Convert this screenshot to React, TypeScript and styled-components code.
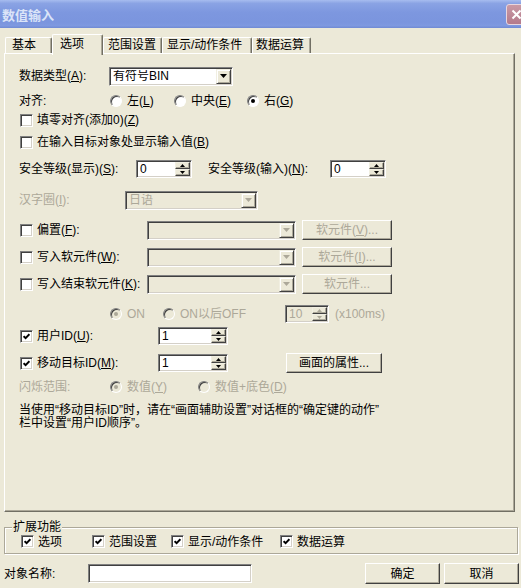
import type { ReactNode } from "react";
import styled, { createGlobalStyle } from "styled-components";

const FACE = "#ECE9D8";
const GRAY = "#ACA899";

const GlobalStyle = createGlobalStyle`
  html, body { margin: 0; padding: 0; background: ${FACE}; }
  body {
    font-family: "Liberation Sans", "Noto Sans CJK SC", sans-serif;
    font-size: 12px;
    color: #000;
  }
  * { box-sizing: border-box; }
`;

const Window = styled.div`
  width: 521px;
  height: 588px;
  overflow: hidden;
  display: flex;
  flex-direction: column;
  background: ${FACE};
`;

const TitleBar = styled.div`
  height: 28px;
  flex-shrink: 0;
  display: flex;
  align-items: center;
  justify-content: space-between;
  padding-left: 2px;
  background: linear-gradient(
    to bottom,
    #a7bcef 0%,
    #8aa3e4 12%,
    #7d97df 45%,
    #7b95de 80%,
    #7f99e0 92%,
    #6f89d3 100%
  );
`;

const Title = styled.span`
  font-family: "Noto Sans CJK SC", sans-serif;
  font-weight: bold;
  font-size: 13px;
  line-height: 16px;
  color: #dbe4f8;
  margin-top: 1px;
`;

const CloseButton = styled.div`
  width: 21px;
  height: 21px;
  margin-right: -6px;
  border: 1px solid #e8d6de;
  border-radius: 3px;
  background: linear-gradient(to bottom, #c99aa6, #b47a8b);
  display: flex;
  align-items: center;
  justify-content: center;
`;

const TabStrip = styled.div`
  display: flex;
  align-items: flex-end;
  height: 19px;
  margin-top: 6px;
  padding-left: 5px;
  position: relative;
  z-index: 1;
`;

const Tab = styled.div<{ $w: number; $pl: number; $active?: boolean }>`
  width: ${(p) => p.$w}px;
  height: ${(p) => (p.$active ? 21 : 16)}px;
  margin-bottom: ${(p) => (p.$active ? -2 : 0)}px;
  padding-left: ${(p) => p.$pl}px;
  padding-top: ${(p) => (p.$active ? 2 : 0)}px;
  background: ${FACE};
  border-top: 1px solid #fff;
  border-left: 1px solid #fff;
  border-right: 1px solid #716f64;
  border-radius: 2px 2px 0 0;
  box-shadow: inset -1px 0 0 ${GRAY};
  line-height: 15px;
  white-space: nowrap;
`;

const Panel = styled.div`
  margin: 0 6px 0 4px;
  height: 459px;
  flex-shrink: 0;
  border-top: 1px solid #fff;
  border-left: 1px solid #fff;
  border-right: 1px solid #716f64;
  border-bottom: 1px solid #716f64;
  box-shadow: inset -1px -1px 0 ${GRAY};
  padding: 12px 0 0 14px;
`;

const Form = styled.div`
  display: grid;
  grid-template-rows: 25px 19px 22px 27px 31px 30px 27px 27px 30px 22px 27px 24px 26px auto;
  align-items: start;
`;

const Row = styled.div`
  display: flex;
  align-items: center;
  height: 20px;
  white-space: nowrap;
`;

const Label = styled.span<{ $w?: number; $ml?: number; $disabled?: boolean }>`
  ${(p) => (p.$w ? `width: ${p.$w}px;` : "")}
  margin-left: ${(p) => p.$ml ?? 0}px;
  flex-shrink: 0;
  line-height: 14px;
  color: ${(p) => (p.$disabled ? GRAY : "#000")};
  white-space: nowrap;
`;

const U = styled.span`
  text-decoration: underline;
`;

const Field = styled.div<{ $w: number; $h?: number; $ml?: number; $disabled?: boolean }>`
  width: ${(p) => p.$w}px;
  height: ${(p) => p.$h ?? 18}px;
  margin-left: ${(p) => p.$ml ?? 0}px;
  flex-shrink: 0;
  display: flex;
  align-items: stretch;
  padding: 2px;
  border: 1px solid;
  border-color: #808080 #fff #fff #808080;
  box-shadow: inset 1px 1px 0 #404040, inset -1px -1px 0 #d4d0c8;
  background: ${(p) => (p.$disabled ? FACE : "#fff")};
`;

const FieldText = styled.span<{ $disabled?: boolean }>`
  flex: 1;
  padding-left: 1px;
  line-height: 13px;
  color: ${(p) => (p.$disabled ? GRAY : "#000")};
  overflow: hidden;
  white-space: nowrap;
`;

const ArrowButton = styled.div`
  width: 15px;
  flex-shrink: 0;
  margin: -1px -1px -1px 0;
  background: ${FACE};
  border: 1px solid;
  border-color: #f1efe2 #404040 #404040 #f1efe2;
  box-shadow: inset 1px 1px 0 #fff, inset -1px -1px 0 ${GRAY};
  display: flex;
  align-items: center;
  justify-content: center;
`;

const SpinButtons = styled.div`
  width: 15px;
  flex-shrink: 0;
  margin: -1px -1px -1px 0;
  display: flex;
  flex-direction: column;
`;

const SpinButton = styled.div`
  flex: 1;
  background: ${FACE};
  border: 1px solid;
  border-color: #f1efe2 #404040 #404040 #f1efe2;
  box-shadow: inset -1px -1px 0 ${GRAY};
  display: flex;
  align-items: center;
  justify-content: center;
`;

const PushButton = styled.div<{ $w: number; $h: number; $ml?: number; $disabled?: boolean }>`
  width: ${(p) => p.$w}px;
  height: ${(p) => p.$h}px;
  margin-left: ${(p) => p.$ml ?? 0}px;
  flex-shrink: 0;
  background: ${FACE};
  border: 1px solid;
  border-color: #fff #404040 #404040 #fff;
  box-shadow: inset -1px -1px 0 ${GRAY};
  display: flex;
  align-items: center;
  justify-content: center;
  line-height: 14px;
  color: ${(p) => (p.$disabled ? GRAY : "#000")};
  white-space: nowrap;
`;

const CheckItem = styled.div<{ $w?: number; $ml?: number }>`
  ${(p) => (p.$w ? `width: ${p.$w}px;` : "")}
  margin-left: ${(p) => p.$ml ?? 0}px;
  flex-shrink: 0;
  display: flex;
  align-items: center;
  gap: 4px;
`;

const Box = styled.span`
  width: 13px;
  height: 13px;
  flex-shrink: 0;
  border: 1px solid;
  border-color: #808080 #fff #fff #808080;
  box-shadow: inset 1px 1px 0 #404040, inset -1px -1px 0 #d4d0c8;
  background: #fff;
  display: flex;
  align-items: center;
  justify-content: center;
`;

const RadioItem = styled.div<{ $w?: number }>`
  ${(p) => (p.$w ? `width: ${p.$w}px;` : "")}
  flex-shrink: 0;
  display: flex;
  align-items: center;
  gap: 5px;
`;

const RadioCircle = styled.span<{ $on?: boolean; $disabled?: boolean }>`
  width: 12px;
  height: 12px;
  flex-shrink: 0;
  border-radius: 50%;
  border: 1px solid;
  border-color: #808080 #fff #fff #808080;
  box-shadow: inset 1px 1px 0 #404040;
  background: ${(p) => (p.$disabled ? FACE : "#fff")};
  display: flex;
  align-items: center;
  justify-content: center;

  &::after {
    content: "";
    width: 4px;
    height: 4px;
    border-radius: 50%;
    background: ${(p) => (p.$on ? (p.$disabled ? GRAY : "#000") : "transparent")};
  }
`;

const Note = styled.div`
  line-height: 13px;
  padding-top: 1px;
  white-space: nowrap;
`;

const Group = styled.fieldset`
  margin: 8px 3px 0 4px;
  padding: 0 0 4px 0;
  min-width: 0;
  border: 1px solid ${GRAY};
  box-shadow: inset 1px 1px 0 #fff, 1px 1px 0 #fff;
`;

const Legend = styled.legend`
  margin-left: 7px;
  padding: 0 1px;
  line-height: 14px;
  background: ${FACE};
`;

const GroupRow = styled.div`
  display: flex;
  align-items: center;
  height: 15px;
  padding-left: 16px;
  white-space: nowrap;
`;

const BottomBar = styled.div`
  display: flex;
  align-items: center;
  margin-top: 9px;
  padding: 0 2px 0 4px;
  height: 21px;
  gap: 4px;
`;

const Filler = styled.div`
  flex: 1;
`;

const Spacer = styled.span<{ $w: number }>`
  width: ${(p) => p.$w}px;
  flex-shrink: 0;
`;

const Tri = ({ up, color, w = 7 }: { up?: boolean; color: string; w?: number }) => (
  <svg width={w} height={Math.ceil(w / 2)} viewBox={`0 0 ${w} ${Math.ceil(w / 2)}`}>
    <polygon
      points={
        up
          ? `${w / 2},0 ${w},${Math.ceil(w / 2)} 0,${Math.ceil(w / 2)}`
          : `0,0 ${w},0 ${w / 2},${Math.ceil(w / 2)}`
      }
      fill={color}
    />
  </svg>
);

const Combo = ({ w, value, disabled, ml }: { w: number; value?: string; disabled?: boolean; ml?: number }) => (
  <Field $w={w} $h={19} $ml={ml} $disabled={disabled}>
    <FieldText $disabled={disabled}>{value}</FieldText>
    <ArrowButton>
      <Tri color={disabled ? GRAY : "#000"} />
    </ArrowButton>
  </Field>
);

const Spin = ({ w, value, disabled, ml }: { w: number; value: string; disabled?: boolean; ml?: number }) => (
  <Field $w={w} $h={18} $ml={ml} $disabled={disabled}>
    <FieldText $disabled={disabled}>{value}</FieldText>
    <SpinButtons>
      <SpinButton>
        <Tri up w={5} color={disabled ? GRAY : "#000"} />
      </SpinButton>
      <SpinButton>
        <Tri w={5} color={disabled ? GRAY : "#000"} />
      </SpinButton>
    </SpinButtons>
  </Field>
);

const Check = ({
  checked,
  w,
  ml = 1,
  children,
}: {
  checked?: boolean;
  w?: number;
  ml?: number;
  children: ReactNode;
}) => (
  <CheckItem $w={w} $ml={ml}>
    <Box>
      {checked && (
        <svg width="7" height="7" viewBox="0 0 7 7">
          <path d="M0.6 3.2 L2.6 5.2 L6.4 1.2" stroke="#000" strokeWidth="1.9" fill="none" />
        </svg>
      )}
    </Box>
    <Label>{children}</Label>
  </CheckItem>
);

const Radio = ({
  on,
  disabled,
  w,
  children,
}: {
  on?: boolean;
  disabled?: boolean;
  w?: number;
  children: ReactNode;
}) => (
  <RadioItem $w={w}>
    <RadioCircle $on={on} $disabled={disabled} />
    <Label $disabled={disabled}>{children}</Label>
  </RadioItem>
);

const tabs = [
  { name: "基本", w: 47, pl: 6 },
  { name: "选项", w: 51, pl: 7, active: true },
  { name: "范围设置", w: 59, pl: 4 },
  { name: "显示/动作条件", w: 90, pl: 4 },
  { name: "数据运算", w: 59, pl: 3 },
];

const App = () => {
  return (
    <>
      <GlobalStyle />
      <Window>
        <TitleBar>
          <Title>数值输入</Title>
          <CloseButton>
            <svg width="11" height="11" viewBox="0 0 11 11">
              <path d="M1.5 1.5 L9.5 9.5 M9.5 1.5 L1.5 9.5" stroke="#fff" strokeWidth="2" />
            </svg>
          </CloseButton>
        </TitleBar>

        <TabStrip>
          {tabs.map((t) => (
            <Tab key={t.name} $w={t.w} $pl={t.pl} $active={t.active}>
              {t.name}
            </Tab>
          ))}
        </TabStrip>

        <Panel>
          <Form>
            <Row>
              <Label $w={90}>
                数据类型(<U>A</U>):
              </Label>
              <Combo w={124} value="有符号BIN" />
            </Row>

            <Row>
              <Label $w={91}>对齐:</Label>
              <Radio w={64}>
                左(<U>L</U>)
              </Radio>
              <Radio w={73}>
                中央(<U>E</U>)
              </Radio>
              <Radio on>
                右(<U>G</U>)
              </Radio>
            </Row>

            <Row>
              <Check>
                填零对齐(添加0)(<U>Z</U>)
              </Check>
            </Row>

            <Row>
              <Check>
                在输入目标对象处显示输入值(<U>B</U>)
              </Check>
            </Row>

            <Row>
              <Label $w={117}>
                安全等级(显示)(<U>S</U>):
              </Label>
              <Spin w={56} value="0" />
              <Label $w={122} $ml={16}>
                安全等级(输入)(<U>N</U>):
              </Label>
              <Spin w={56} value="0" />
            </Row>

            <Row>
              <Label $w={106} $disabled>
                汉字圈(<U>I</U>):
              </Label>
              <Combo w={133} value="日语" disabled />
            </Row>

            <Row>
              <Check w={127}>
                偏置(<U>F</U>):
              </Check>
              <Combo w={149} disabled />
              <PushButton $w={90} $h={20} $ml={6} $disabled>
                软元件(<U>V</U>)...
              </PushButton>
            </Row>

            <Row>
              <Check w={127}>
                写入软元件(<U>W</U>):
              </Check>
              <Combo w={149} disabled />
              <PushButton $w={90} $h={20} $ml={6} $disabled>
                软元件(<U>I</U>)...
              </PushButton>
            </Row>

            <Row>
              <Check w={127}>
                写入结束软元件(<U>K</U>):
              </Check>
              <Combo w={149} disabled />
              <PushButton $w={90} $h={20} $ml={6} $disabled>
                软元件...
              </PushButton>
            </Row>

            <Row>
              <Spacer $w={91} />
              <Radio w={53} on disabled>
                ON
              </Radio>
              <Radio w={122} disabled>
                ON以后OFF
              </Radio>
              <Spin w={44} value="10" disabled />
              <Label $ml={6} $disabled>
                (x100ms)
              </Label>
            </Row>

            <Row>
              <Check w={138} checked>
                用户ID(<U>U</U>):
              </Check>
              <Spin w={70} value="1" />
            </Row>

            <Row>
              <Check w={138} checked>
                移动目标ID(<U>M</U>):
              </Check>
              <Spin w={70} value="1" />
              <PushButton $w={96} $h={20} $ml={58}>
                画面的属性...
              </PushButton>
            </Row>

            <Row>
              <Label $w={91} $disabled>
                闪烁范围:
              </Label>
              <Radio w={88} on disabled>
                数值(<U>Y</U>)
              </Radio>
              <Radio disabled>
                数值+底色(<U>D</U>)
              </Radio>
            </Row>

            <Note>
              当使用“移动目标ID”时，请在“画面辅助设置”对话框的“确定键的动作”
              <br />
              栏中设置“用户ID顺序”。
            </Note>
          </Form>
        </Panel>

        <Group>
          <Legend>扩展功能</Legend>
          <GroupRow>
            <Check w={71} ml={0} checked>
              选项
            </Check>
            <Check w={79} ml={0} checked>
              范围设置
            </Check>
            <Check w={109} ml={0} checked>
              显示/动作条件
            </Check>
            <Check ml={0} checked>
              数据运算
            </Check>
          </GroupRow>
        </Group>

        <BottomBar>
          <Label $w={80}>对象名称:</Label>
          <Field $w={164} $h={19} />
          <Filler />
          <PushButton $w={75} $h={21}>
            确定
          </PushButton>
          <PushButton $w={75} $h={21}>
            取消
          </PushButton>
        </BottomBar>
      </Window>
    </>
  );
};

export default App;
